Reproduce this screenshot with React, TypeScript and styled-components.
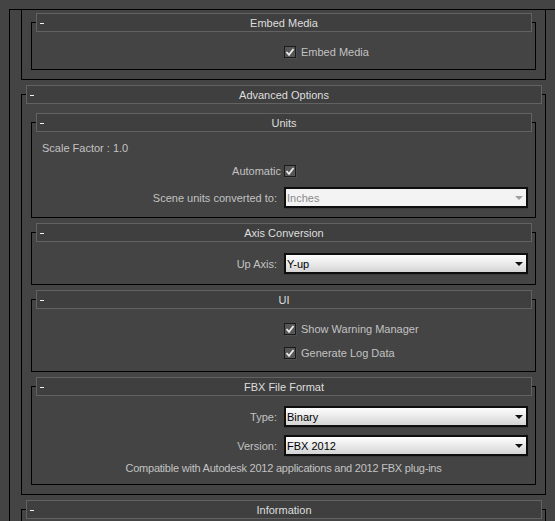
import React from "react";
import styled, { createGlobalStyle } from "styled-components";

const GlobalStyle = createGlobalStyle`
  html, body {
    margin: 0;
    padding: 0;
    background: #444444;
  }
  body {
    font-family: "Liberation Sans", Arial, sans-serif;
    font-size: 11px;
    color: #c2c2c2;
  }
`;

const Page = styled.div`
  width: 555px;
  height: 521px;
  overflow: hidden;
  box-sizing: border-box;
  padding: 9px 0 0 9px;
  background: #444444;
`;

const OuterFrame = styled.div`
  border-top: 1px solid #000;
  border-left: 1px solid #000;
  min-height: 620px;
  padding-left: 11px;
`;

// body of the rollout whose header is scrolled out of view
const CutFrame = styled.div`
  width: 525px;
  box-sizing: border-box;
  border: 1px solid #000;
  border-top: none;
  padding: 12px 9px 9px;
`;

const Frame = styled.section<{ $top?: number; $wide?: boolean; $minH?: number }>`
  border: 1px solid #000;
  margin-top: ${({ $top }) => $top ?? 14}px;
  ${({ $wide }) => ($wide ? "width: 525px; box-sizing: border-box;" : "")}
  ${({ $minH }) => ($minH ? `min-height: ${$minH}px;` : "")}
`;

const FrameInner = styled.div<{ $pad?: number }>`
  padding: 0 ${({ $pad }) => $pad ?? 0}px ${({ $pad }) => $pad ?? 0}px;
`;

const Header = styled.div`
  margin: -10px 3px 0 4px;
  height: 19px;
  box-sizing: border-box;
  border: 1px solid #626262;
  background: #3f3f3f;
  display: grid;
  grid-template-columns: 20px 1fr 20px;
  align-items: center;
  color: #dedede;
`;

const Minus = styled.span`
  display: block;
  width: 4px;
  height: 1px;
  margin-left: 3px;
  margin-top: 1px;
  background: #f0f0f0;
`;

const Title = styled.span`
  text-align: center;
  line-height: 17px;
  padding-top: 1px;
`;

const Body = styled.div<{ $pt: number; $pb: number; $gap?: number }>`
  display: flex;
  flex-direction: column;
  gap: ${({ $gap }) => $gap ?? 0}px;
  padding: ${({ $pt }) => $pt}px 7px ${({ $pb }) => $pb}px 0;
`;

const Row = styled.div<{ $h?: number }>`
  display: grid;
  grid-template-columns: 1fr 244px;
  column-gap: 7px;
  align-items: center;
  height: ${({ $h }) => $h ?? 14}px;
`;

const Label = styled.span<{ $tight?: boolean }>`
  text-align: right;
  white-space: nowrap;
  margin-right: ${({ $tight }) => ($tight ? -4 : 0)}px;
`;

const Plain = styled.div<{ $center?: boolean }>`
  height: 14px;
  line-height: 14px;
  padding-left: ${({ $center }) => ($center ? 7 : 10)}px;
  text-align: ${({ $center }) => ($center ? "center" : "left")};
  letter-spacing: ${({ $center }) => ($center ? "-0.22px" : "normal")};
  margin-top: ${({ $center }) => ($center ? -3 : 0)}px;
  white-space: nowrap;
`;

const CheckLine = styled.label`
  display: flex;
  align-items: center;
  gap: 5px;
`;

const Box = styled.span`
  width: 12px;
  height: 12px;
  box-sizing: border-box;
  border: 1px solid #1b1b1b;
  background: #565656;
  box-shadow: 1px 1px 0 #4e4e4e;
  display: inline-flex;
  align-items: center;
  justify-content: center;
`;

const Select = styled.div<{ $disabled?: boolean }>`
  height: 21px;
  box-sizing: border-box;
  border: 2px solid #0e0e0e;
  box-shadow: 0 1px 0 #3a3a3a;
  background: ${({ $disabled }) =>
    $disabled ? "#f3f3f3" : "linear-gradient(#fdfdfd, #ececec 45%, #d4d4d4)"};
  color: ${({ $disabled }) => ($disabled ? "#8a8a8a" : "#000")};
  display: flex;
  align-items: center;
  justify-content: space-between;
  padding: 0 3px 0 1px;
`;

const Arrow = styled.span<{ $disabled?: boolean }>`
  width: 0;
  height: 0;
  border-left: 4px solid transparent;
  border-right: 4px solid transparent;
  border-top: 4px solid ${({ $disabled }) => ($disabled ? "#a0a0a0" : "#111")};
`;

const Check = () => (
  <Box>
    <svg width="10" height="10" viewBox="0 0 10 10">
      <polyline
        points="1.5,5 4,7.8 8.5,2"
        fill="none"
        stroke="#ececec"
        strokeWidth="1.8"
      />
    </svg>
  </Box>
);

const Dropdown = ({ value, disabled }: { value: string; disabled?: boolean }) => (
  <Select $disabled={disabled}>
    <span>{value}</span>
    <Arrow $disabled={disabled} />
  </Select>
);

const RolloutHeader = ({ title }: { title: string }) => (
  <Header>
    <Minus />
    <Title>{title}</Title>
    <span />
  </Header>
);

export default function App() {
  return (
    <Page>
      <GlobalStyle />
      <OuterFrame>
        <CutFrame>
          <Frame $top={0}>
            <RolloutHeader title="Embed Media" />
            <Body $pt={13} $pb={10}>
              <Row>
                <span />
                <CheckLine>
                  <Check />
                  Embed Media
                </CheckLine>
              </Row>
            </Body>
          </Frame>
        </CutFrame>

        <Frame $wide>
          <RolloutHeader title="Advanced Options" />
          <FrameInner $pad={9}>
            <Frame $top={18}>
              <RolloutHeader title="Units" />
              <Body $pt={9} $pb={9} $gap={9}>
                <Plain>Scale Factor : 1.0</Plain>
                <Row>
                  <Label $tight>Automatic</Label>
                  <Check />
                </Row>
                <Row $h={21}>
                  <Label>Scene units converted to:</Label>
                  <Dropdown value="Inches" disabled />
                </Row>
              </Body>
            </Frame>

            <Frame>
              <RolloutHeader title="Axis Conversion" />
              <Body $pt={11} $pb={10}>
                <Row $h={21}>
                  <Label>Up Axis:</Label>
                  <Dropdown value="Y-up" />
                </Row>
              </Body>
            </Frame>

            <Frame>
              <RolloutHeader title="UI" />
              <Body $pt={13} $pb={11} $gap={10}>
                <Row>
                  <span />
                  <CheckLine>
                    <Check />
                    Show Warning Manager
                  </CheckLine>
                </Row>
                <Row>
                  <span />
                  <CheckLine>
                    <Check />
                    Generate Log Data
                  </CheckLine>
                </Row>
              </Body>
            </Frame>

            <Frame>
              <RolloutHeader title="FBX File Format" />
              <Body $pt={10} $pb={9} $gap={8}>
                <Row $h={21}>
                  <Label>Type:</Label>
                  <Dropdown value="Binary" />
                </Row>
                <Row $h={21}>
                  <Label>Version:</Label>
                  <Dropdown value="FBX 2012" />
                </Row>
                <Plain $center>
                  Compatible with Autodesk 2012 applications and 2012 FBX plug-ins
                </Plain>
              </Body>
            </Frame>
          </FrameInner>
        </Frame>

        <Frame $wide $minH={60}>
          <RolloutHeader title="Information" />
        </Frame>
      </OuterFrame>
    </Page>
  );
}
